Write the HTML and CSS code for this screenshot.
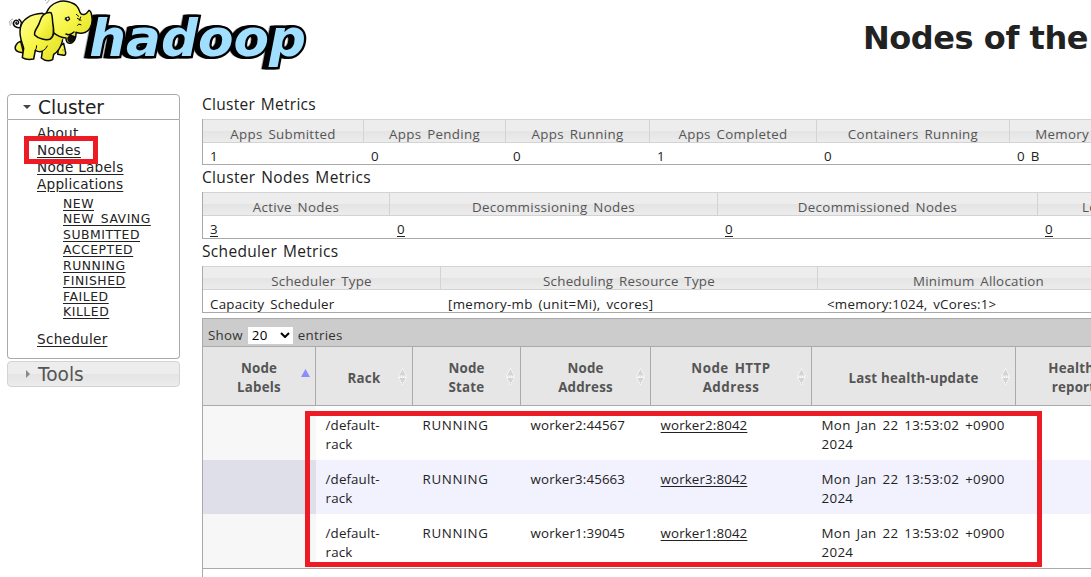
FILE: index.html
```html
<!DOCTYPE html>
<html lang="en">
<head>
<meta charset="utf-8">
<title>Nodes of the cluster</title>
<link rel="stylesheet" href="styles.css">
</head>
<body>
<header class="top">
  <svg class="logo" viewBox="0 0 960 225" role="img" aria-label="hadoop">
    <defs>
      <linearGradient id="skin" x1="0" y1="0" x2="1" y2="1"><stop offset="0" stop-color="#ffff96"/><stop offset=".5" stop-color="#f7f546"/><stop offset="1" stop-color="#dedd20"/></linearGradient>
    </defs>
    <text class="word" x="268" y="169" textLength="650" lengthAdjust="spacingAndGlyphs">hadoop</text>
    <g fill="url(#skin)" stroke="#0a0a0a" stroke-width="4.5" stroke-linejoin="round" stroke-linecap="round">
      <path d="M63 82C48 86 36 76 42 65C48 56 60 64 54 71C49 75 46 70 49 67M62 77C66 70 64 62 57 58" fill="none"/>
      <path d="M62 124C48 128 42 143 48 151C54 158 65 158 71 159Z"/>
      <path d="M176 140L173 163L190 166Q198 166 197 158L191 130Z"/>
      <path d="M128 40C90 42 65 59 61 84C56 111 67 128 71 145L67 173Q80 181 101 177L106 151Q116 157 127 154L124 174Q140 188 158 179L161 163Q180 151 187 124L190 75Z"/>
      <path stroke="none" d="M120 50L160 25L200 105L180 125L130 110Z"/>
      <path d="M140 37C152 8 185 -4 214 8C230 12 236 22 240 37C246 48 258 45 267 31Q274 34 275 47C281 77 266 97 248 99C239 101 234 99 228 97C229 113 223 128 210 130C200 131 198 121 198 114C185 113 170 106 159 97"/>
      <path d="M211 106L224 110Q224 122 212 126Q204 125 204 114Z" fill="#101008"/>
      <path d="M198 102Q209 108 222 96" fill="none"/>
      <path d="M153 38C134 36 124 48 119 66C115 82 101 91 104 105C114 116 139 122 151 117C164 109 162 90 158 67C157 51 157 45 153 38Z"/>
      <path d="M106 151Q110 146 110 137M127 154Q139 147 142 138M195 57Q201 50 208 57M232 55L243 61M232 76Q235 69 243 74M229 43L236 49M242 51L238 61" fill="none" stroke-width="3"/>
      <path d="M194 53L207 49L211 58L204 64Q196 64 194 53Z" fill="#111" stroke="none"/><circle cx="203" cy="56" r="3" fill="#fff" stroke="none"/>
      <path d="M140 10L148 0M136 2L140 -4M31 76L29 65Q32 58 38 57M36 72L35 65M187 150L195 151" fill="none" stroke="#777" stroke-width="2"/>
    </g>
  </svg>
  <h1 class="title">Nodes of the cluster</h1>
</header>
<main class="layout">
  <nav class="side">
    <h3 class="side-head open"><i class="arrow down"></i>Cluster</h3>
    <div class="side-body">
      <ul class="links">
        <li><a>About</a></li>
        <li><a>Nodes</a></li>
        <li><a>Node Labels</a></li>
        <li><a>Applications</a>
          <ul class="states">
            <li><a>NEW</a></li><li><a>NEW_SAVING</a></li><li><a>SUBMITTED</a></li><li><a>ACCEPTED</a></li><li><a>RUNNING</a></li><li><a>FINISHED</a></li><li><a>FAILED</a></li><li><a>KILLED</a></li>
          </ul>
        </li>
        <li><a>Scheduler</a></li>
      </ul>
    </div>
    <h3 class="side-head closed"><i class="arrow right"></i>Tools</h3>
  </nav>
  <section class="content">
    <h4 class="caption">Cluster Metrics</h4>
    <div class="metrics apps">
      <b>Apps Submitted</b><b>Apps Pending</b><b>Apps Running</b><b>Apps Completed</b><b>Containers Running</b><b>Memory Used</b>
      <span>1</span><span>0</span><span>0</span><span>1</span><span>0</span><span>0 B</span>
    </div>
    <h4 class="caption wide">Cluster Nodes Metrics</h4>
    <div class="metrics nodes">
      <b>Active Nodes</b><b>Decommissioning Nodes</b><b>Decommissioned Nodes</b><b>Lost Nodes</b>
      <span><a>3</a></span><span><a>0</a></span><span><a>0</a></span><span><a>0</a></span>
    </div>
    <h4 class="caption wide">Scheduler Metrics</h4>
    <div class="metrics sched">
      <b>Scheduler Type</b><b>Scheduling Resource Type</b><b>Minimum Allocation</b>
      <span>Capacity Scheduler</span><span class="res">[memory-mb (unit=Mi), vcores]</span><span class="alloc">&lt;memory:1024, vCores:1&gt;</span>
    </div>
    <div class="data">
      <div class="bar"><span>Show</span><span class="select">20<svg viewBox="0 0 10 6"><path d="M1 1l4 4 4-4"/></svg></span><span>entries</span></div>
      <div class="row head">
        <div>Node<br>Labels<svg class="asc" viewBox="0 0 9 8"><path d="M4.5 0L9 8H0z"/></svg></div>
        <div class="single">Rack<svg class="sort" viewBox="0 0 9 17"><path d="M4.5 .5L8.5 8H.5zM.5 9.5h8L4.5 16.5z"/></svg></div>
        <div>Node<br>State<svg class="sort" viewBox="0 0 9 17"><path d="M4.5 .5L8.5 8H.5zM.5 9.5h8L4.5 16.5z"/></svg></div>
        <div>Node<br>Address<svg class="sort" viewBox="0 0 9 17"><path d="M4.5 .5L8.5 8H.5zM.5 9.5h8L4.5 16.5z"/></svg></div>
        <div class="http">Node HTTP<br>Address<svg class="sort" viewBox="0 0 9 17"><path d="M4.5 .5L8.5 8H.5zM.5 9.5h8L4.5 16.5z"/></svg></div>
        <div class="single">Last health-update<svg class="sort" viewBox="0 0 9 17"><path d="M4.5 .5L8.5 8H.5zM.5 9.5h8L4.5 16.5z"/></svg></div>
        <div>Health-<br>report</div>
      </div>
      <div class="row"><div></div><div>/default-<br>rack</div><div class="st">RUNNING</div><div>worker2:44567</div><div><a>worker2:8042</a></div><div class="date">Mon Jan 22 13:53:02 +0900<br>2024</div><div></div></div>
      <div class="row even"><div></div><div>/default-<br>rack</div><div class="st">RUNNING</div><div>worker3:45663</div><div><a>worker3:8042</a></div><div class="date">Mon Jan 22 13:53:02 +0900<br>2024</div><div></div></div>
      <div class="row"><div></div><div>/default-<br>rack</div><div class="st">RUNNING</div><div>worker1:39045</div><div><a>worker1:8042</a></div><div class="date">Mon Jan 22 13:53:02 +0900<br>2024</div><div></div></div>
      <div class="foot"></div>
    </div>
  </section>
</main>
<div class="mark mark-nav"></div>
<div class="mark mark-rows"></div>
</body>
</html>
```
FILE: styles.css
```css
* { box-sizing: border-box; }
body { margin: 0; width: 1091px; height: 577px; overflow: hidden; position: relative; background: #fff; color: #222; font-family: "Open Sans", "Noto Sans CJK KR", sans-serif; font-size: 13.33px; }
h1, h3, h4, ul { margin: 0; padding: 0; font-weight: 400; list-style: none; }
a { text-decoration: underline; text-underline-offset: 2px; }

.top { display: flex; height: 94px; }
.logo { width: 320px; height: 75px; flex: none; }
.word { font: italic bold 154px "DejaVu Sans", sans-serif; fill: #a0dfff; stroke: #000; stroke-width: 14px; stroke-linejoin: miter; paint-order: stroke; filter: drop-shadow(-9px 0 0 #000) drop-shadow(-4px 0 0 #000); }
.title { margin-left: 543px; padding-top: 19px; font: bold 32px/38px "DejaVu Sans", sans-serif; letter-spacing: -0.45px; white-space: nowrap; }

.layout { display: flex; }
.side { width: 173px; margin-left: 7px; flex: none; font-family: "DejaVu Sans", sans-serif; }
.side-head { display: flex; align-items: center; height: 26px; border: 1px solid #aaa; font-size: 18.6px; letter-spacing: 0; }
.side-head.open { border-radius: 4px 4px 0 0; color: #212121; }
.side-head.closed { margin-top: 2px; border-color: #d3d3d3; border-radius: 4px; color: #555; background: linear-gradient(#ededed 50%, #e4e4e4 50%, #ececec); }
.arrow { margin: 0 7px 0 15px; width: 8px; height: 4px; background: #454545; clip-path: polygon(0 0, 100% 0, 50% 100%); }
.arrow.right { width: 4px; height: 8px; margin: 0 8px 0 18px; background: #888; clip-path: polygon(0 0, 100% 50%, 0 100%); }
.side-body { height: 239px; border: 1px solid #aaa; border-top: 0; border-radius: 0 0 4px 4px; padding: 5px 0 0 29px; }
.links { font-size: 13.6px; line-height: 17px; letter-spacing: 0.27px; }
.states { padding: 3px 0 11px 26px; font-size: 12.4px; line-height: 15.45px; letter-spacing: 0.55px; }

.content { margin-left: 22px; flex: none; width: 1010px; }
.caption { height: 25px; font-size: 15.5px; line-height: 21px; letter-spacing: 0.27px; word-spacing: 1.5px; }
.caption.wide { letter-spacing: 0.33px; }
.metrics { display: grid; grid-template-rows: 24px 22px; height: 47px; margin-bottom: 2px; border-left: 1px solid #aaa; border-bottom: 1px solid #aaa; letter-spacing: 0.32px; word-spacing: 2px; }
.metrics b { border: 1px solid #d3d3d3; border-left: 0; font-weight: 400; color: #555; text-align: center; line-height: 28px; white-space: nowrap; background: linear-gradient(#ededed 50%, #e4e4e4 50%, #ececec); }
.metrics span { padding-left: 7px; line-height: 27px; white-space: nowrap; }
.apps { grid-template-columns: 161px 142px 144px 167px 193px 144px; height: 46px; }
.nodes { grid-template-columns: 187px 328px 320px 164px; }
.sched { grid-template-columns: 238px 377px 322px; margin-bottom: 5px; letter-spacing: 0.25px; }
.metrics.sched span { line-height: 29px; }
.metrics .res { letter-spacing: 0.33px; }
.metrics .alloc { padding-left: 9px; letter-spacing: 0.24px; }

.data { border: 1px solid #aaa; border-bottom: 0; }
.bar { display: flex; align-items: center; height: 28px; padding: 5px 0 0 5px; background: #ccc; border-bottom: 1px solid #aaa; color: #333; letter-spacing: 0.25px; }
.select { display: flex; align-items: center; width: 45px; height: 17px; margin: 0 5px 0 5px; padding-left: 4px; background: #fff; color: #000; }
.select svg { width: 10px; height: 6px; margin-left: 12px; fill: none; stroke: #000; stroke-width: 2; }
.row { display: grid; grid-template-columns: 113px 97px 108px 130px 161px 204px 116px; height: 54px; line-height: 19px; letter-spacing: 0.12px; }
.row > div { padding: 10px 0 0 9.6px; white-space: nowrap; }
.row > .st { letter-spacing: 0.65px; }
.row > .date { letter-spacing: 0.28px; word-spacing: 2.2px; }
.row > div:first-child { background: #f7f7f7; }
.row.even { background: #f2f2ff; }
.row.even > div:first-child { background: #dfdfea; }
.row.head { height: 59px; background: #e6e6e6; border-bottom: 1px solid #aaa; font-weight: 700; color: #555; text-align: center; letter-spacing: 0.2px; }
.row.head > div { position: relative; display: flex; flex-direction: column; justify-content: center; padding: 3px 0 0; background: none; border-right: 1px solid #aaa; }
.row.head > .single { padding-top: 5px; }
.row.head > .http { letter-spacing: 0.5px; word-spacing: 2px; }
.sort { position: absolute; right: 5px; top: 21px; width: 9px; height: 17px; fill: #d4d4d4; stroke: #fff; stroke-width: 1; stroke-dasharray: 1.5 .7; }
.asc { position: absolute; right: 5px; top: 22px; width: 9px; height: 8px; fill: #8c8cff; }
.foot { height: 20px; border-top: 1px solid #aaa; }

.mark { position: absolute; border: 5px solid #ed1c24; }
.mark-nav { left: 24px; top: 136px; width: 74px; height: 28px; }
.mark-rows { left: 305px; top: 411px; width: 737px; height: 156px; }
```
